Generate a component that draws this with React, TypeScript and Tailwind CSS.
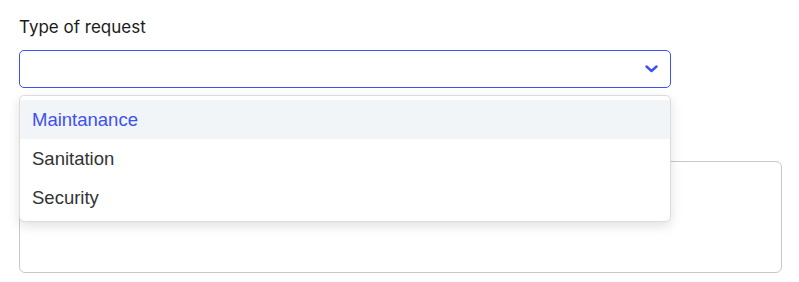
import React from "react";

export default function App() {
  const options = ["Maintanance", "Sanitation", "Security"];
  return (
    <div className="w-[799px] h-[282px] bg-white pl-[19px] pt-[15px]">
      <div className="text-[17px] leading-[24px] text-[#1b1b1b] font-['Inter',sans-serif]">
        Type of request
      </div>
      <div className="relative mt-[11px] w-[652px]">
        <div className="h-[38px] rounded-[5px] border border-[#3d50f5] bg-white flex items-center justify-end pr-[12px]">
          <svg width="13" height="8" viewBox="0 0 13 8" fill="none">
            <path d="M1.5 1.5 L6.5 6 L11.5 1.5" stroke="#3d50f5" strokeWidth="2.4" strokeLinecap="round" strokeLinejoin="round" />
          </svg>
        </div>
        <div className="absolute left-0 top-full mt-[7px] z-10 w-[652px] rounded-[5px] border border-[#dcdcdc] bg-white py-[4px] shadow-[0_4px_12px_rgba(0,0,0,0.12)] font-['Liberation_Sans',Arial,sans-serif] text-[18.5px]">
          {options.map((o, i) => (
            <div
              key={o}
              className={
                i === 0
                  ? "h-[39px] leading-[39px] pl-[12px] bg-[#f1f5f8] text-[#3d50f5]"
                  : "h-[39px] leading-[39px] pl-[12px] text-[#333333]"
              }
            >
              {o}
            </div>
          ))}
        </div>
      </div>
      <div className="mt-[73px] w-[763px] h-[112px] rounded-[6px] border border-[#c8c8c8] bg-white" />
    </div>
  );
}
